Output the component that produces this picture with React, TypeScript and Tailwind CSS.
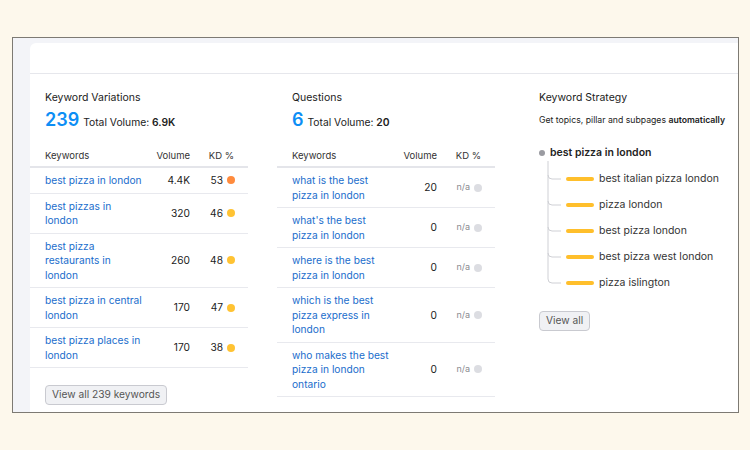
import React from 'react';

type Row = { kw: string; vol: string; kd: string; dot: string };

const variations: Row[] = [
  { kw: 'best pizza in london', vol: '4.4K', kd: '53', dot: 'bg-[#ff8b3d]' },
  { kw: 'best pizzas in london', vol: '320', kd: '46', dot: 'bg-[#ffc333]' },
  { kw: 'best pizza restaurants in london', vol: '260', kd: '48', dot: 'bg-[#ffc333]' },
  { kw: 'best pizza in central london', vol: '170', kd: '47', dot: 'bg-[#ffc333]' },
  { kw: 'best pizza places in london', vol: '170', kd: '38', dot: 'bg-[#ffc333]' },
];

const questions: Row[] = [
  { kw: 'what is the best pizza in london', vol: '20', kd: 'n/a', dot: 'bg-[#dcdde2]' },
  { kw: "what's the best pizza in london", vol: '0', kd: 'n/a', dot: 'bg-[#dcdde2]' },
  { kw: 'where is the best pizza in london', vol: '0', kd: 'n/a', dot: 'bg-[#dcdde2]' },
  { kw: 'which is the best pizza express in london', vol: '0', kd: 'n/a', dot: 'bg-[#dcdde2]' },
  { kw: 'who makes the best pizza in london ontario', vol: '0', kd: 'n/a', dot: 'bg-[#dcdde2]' },
];

const topics = [
  'best italian pizza london',
  'pizza london',
  'best pizza london',
  'best pizza west london',
  'pizza islington',
];

function Stats({ title, count, total }: { title: string; count: string; total: string }) {
  return (
    <div className="px-[15px]">
      <div className="text-[10.5px] leading-[14px] text-[#222]">{title}</div>
      <div className="mt-[4px] h-[22px] flex items-baseline gap-[4px]">
        <span className="text-[18px] leading-[22px] font-semibold text-[#0d8ef5]">{count}</span>
        <span className="text-[10.3px] text-[#222]">
          Total Volume: <b className="font-semibold">{total}</b>
        </span>
      </div>
    </div>
  );
}

function Table({ rows, na }: { rows: Row[]; na?: boolean }) {
  return (
    <div className="mt-[15px]">
      <div className="h-[22px] flex items-center pl-[15px] pr-[13px] text-[9.5px] text-[#333] border-b-2 border-[#e4e5ea]">
        <div className="w-[100px]">Keywords</div>
        <div className="w-[45px] text-right">Volume</div>
        <div className="w-[45px] text-right pr-[1px]">KD %</div>
      </div>
      {rows.map((r) => (
        <div
          key={r.kw}
          className="flex items-center pl-[15px] pr-[13px] py-[5px] border-b border-[#e8e9ee] text-[10.2px] leading-[14.5px]"
        >
          <div className="w-[100px] text-[#1a6dcc]">{r.kw}</div>
          <div className="w-[45px] text-right text-[#222]">{r.vol}</div>
          <div className="w-[45px] flex items-center justify-end gap-[4px]">
            <span className={na ? 'text-[9px] text-[#8a8b90]' : 'text-[#222]'}>{r.kd}</span>
            <span className={`w-[8px] h-[8px] rounded-full ${r.dot}`} />
          </div>
        </div>
      ))}
    </div>
  );
}

function Button({ children }: { children: React.ReactNode }) {
  return (
    <div className="flex w-fit h-[20px] items-center px-[6px] rounded-[4px] border border-[#c9cad0] bg-[#f0f1f4] text-[10.2px] text-[#555]">
      {children}
    </div>
  );
}

export default function App() {
  return (
    <div
      className="w-[750px] h-[450px] bg-[#fdf8ec] pt-[37px] pl-[12px]"
      style={{ fontFamily: 'Inter, "Liberation Sans", sans-serif' }}
    >
      <div className="w-[727px] h-[376px] border border-[#7d7a73] bg-[#f3f4f8] overflow-hidden pl-[17px] pt-[5px]">
        <div className="w-[800px] h-full bg-white rounded-tl-[6px]">
          <div className="h-[31px] border-b border-[#e6e7ec]" />
          <div className="flex gap-[29px] pt-[17px]">
            <section className="w-[218px] shrink-0">
              <Stats title="Keyword Variations" count="239" total="6.9K" />
              <Table rows={variations} />
              <div className="mt-[17px] px-[15px]">
                <Button>View all 239 keywords</Button>
              </div>
            </section>

            <section className="w-[218px] shrink-0">
              <Stats title="Questions" count="6" total="20" />
              <Table rows={questions} na />
            </section>

            <section className="w-[218px] shrink-0 px-[15px]">
              <div className="text-[10.5px] leading-[14px] text-[#222]">Keyword Strategy</div>
              <div className="mt-[4px] h-[22px] leading-[22px] whitespace-nowrap text-[8.7px] text-[#222]">
                Get topics, pillar and subpages <b className="font-semibold">automatically</b>
              </div>
              <div className="relative mt-[12px]">
                <svg className="absolute left-0 top-0" width="30" height="160" fill="none">
                  <path
                    d="M9 18 V136 Q9 140 13 140 H22 M9 32 Q9 36 13 36 H22 M9 58 Q9 62 13 62 H22 M9 84 Q9 88 13 88 H22 M9 110 Q9 114 13 114 H22"
                    stroke="#cfd0d5"
                    strokeWidth="1"
                  />
                </svg>
                <div className="h-[20px] flex items-center gap-[5px]">
                  <span className="w-[6px] h-[6px] rounded-full bg-[#9a9ba1]" />
                  <span className="text-[10.5px] font-semibold text-[#222]">best pizza in london</span>
                </div>
                <div className="mt-[3px]">
                  {topics.map((t) => (
                    <div key={t} className="h-[26px] flex items-center pl-[27px] gap-[5px]">
                      <span className="w-[28px] h-[4px] rounded-full bg-[#ffbf2b]" />
                      <span className="text-[10.5px] text-[#333]">{t}</span>
                    </div>
                  ))}
                </div>
              </div>
              <div className="mt-[15px]">
                <Button>View all</Button>
              </div>
            </section>
          </div>
        </div>
      </div>
    </div>
  );
}
